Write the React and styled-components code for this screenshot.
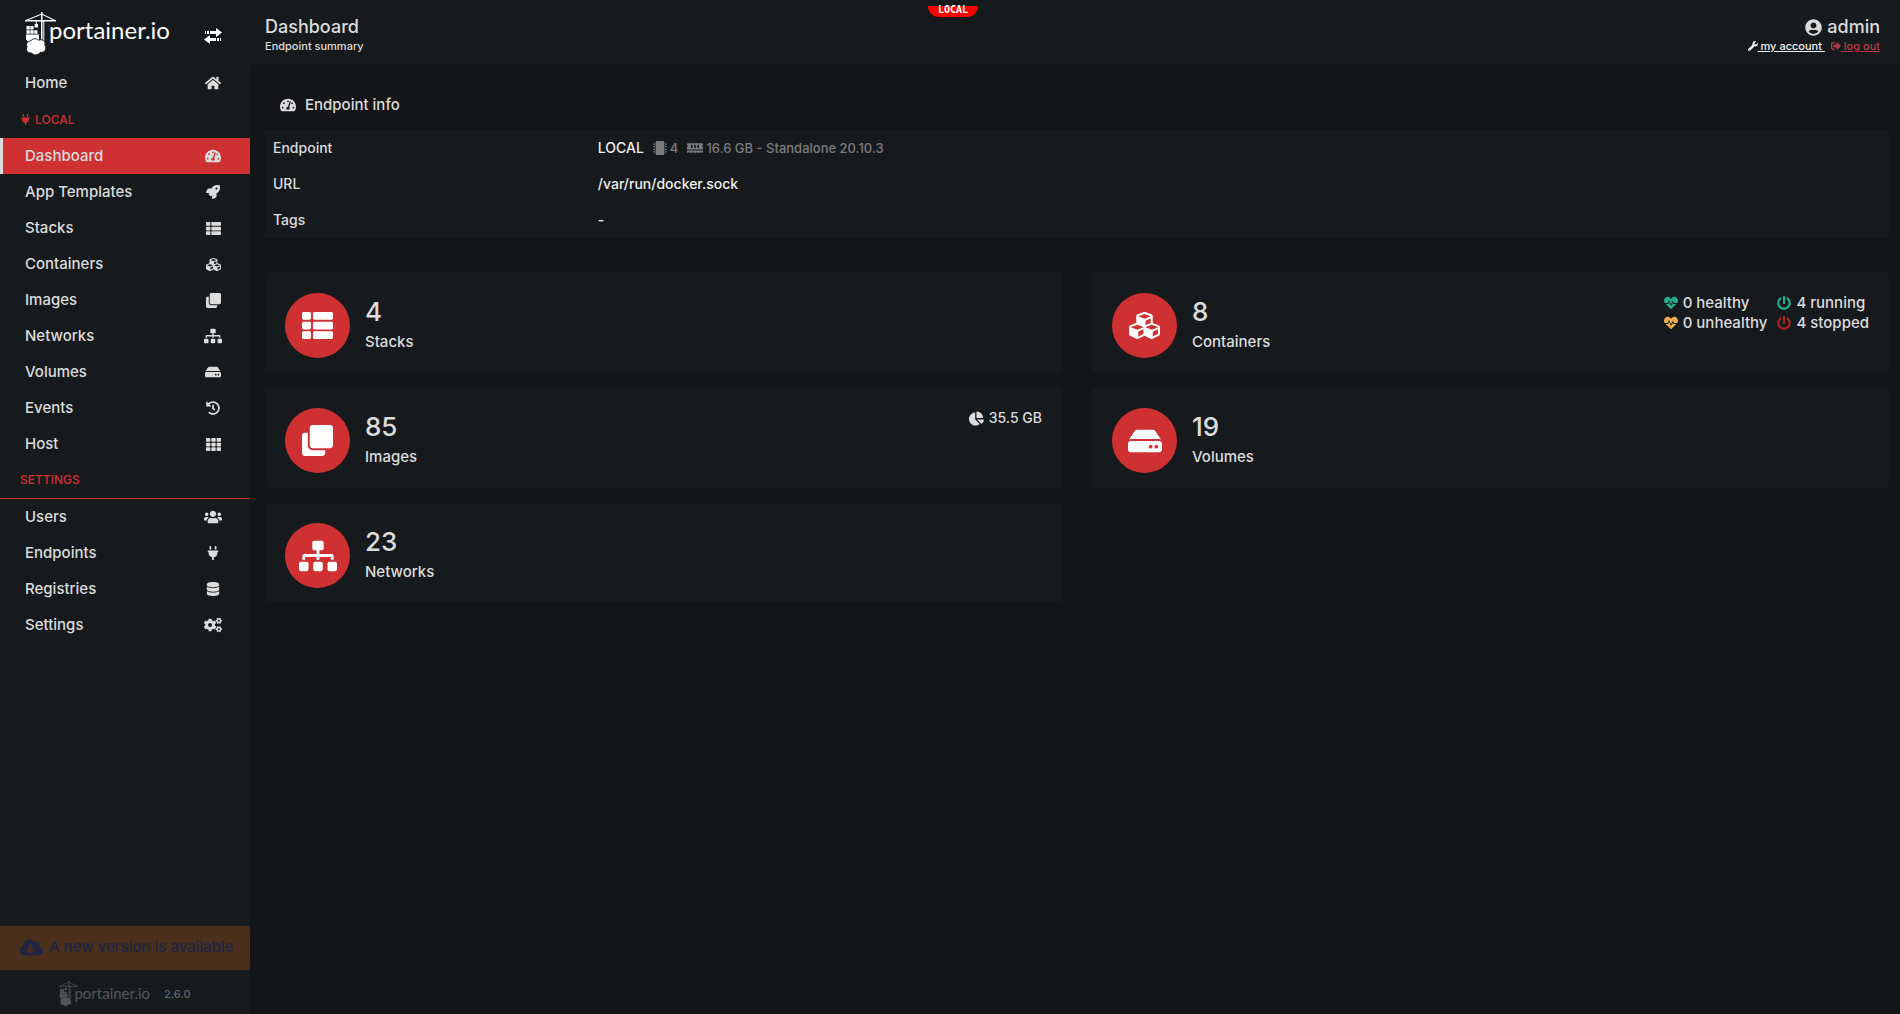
import React from "react";
import styled, { createGlobalStyle } from "styled-components";
import {
  FaChartPie, FaClone, FaCloudDownloadAlt, FaCogs, FaCubes, FaDatabase, FaHdd, FaHeartbeat,
  FaHistory, FaHome, FaMemory, FaMicrochip, FaPlug, FaPowerOff, FaRocket, FaSignOutAlt,
  FaSitemap, FaTachometerAlt, FaTh, FaThList, FaUserCircle, FaUsers, FaWrench,
} from "react-icons/fa";

const color = {
  page: "#141518",
  panel: "#171a1d",
  accent: "#cf3032",
  text: "#dcdcdc",
  bright: "#f0f0f0",
  muted: "#7b7c7d",
  green: "#23ae89",
  orange: "#f0ad4e",
  stop: "#ae2323",
};

const GlobalStyle = createGlobalStyle`
  * { box-sizing: border-box; }
  body {
    margin: 0;
    background: ${color.page};
    color: ${color.text};
    font: 500 15px/20px Inter, "Open Sans", sans-serif;
  }
  h1, h2, p, ul { margin: 0; padding: 0; font-weight: 500; }
  ul { list-style: none; }
  svg { display: block; flex: none; }
`;

const Shell = styled.div`
  display: grid;
  grid-template-columns: 250px minmax(0, 1fr);
  min-height: 100vh;
`;

const Sidebar = styled.aside`
  display: flex;
  flex-direction: column;
  background: ${color.panel};
`;

const Brand = styled.div`
  display: flex;
  align-items: center;
  justify-content: space-between;
  height: 65px;
  padding: 2px 28px 0 25px;
`;

const LogoBox = styled.a`
  display: flex;
  color: ${(p) => (p.$small ? "#54575a" : "#fff")};
  text-decoration: none;
`;

const LogoName = styled.span`
  margin-left: ${(p) => (p.$small ? "-6px" : "-11px")};
  font: 400 ${(p) => (p.$small ? "15px/24px" : "24px/36px")} Lato, sans-serif;
`;

const ToggleButton = styled.button`
  margin-top: 4px;
  padding: 0;
  border: 0;
  background: none;
  color: #fff;
  cursor: pointer;
`;

const NavLink = styled.a`
  display: flex;
  align-items: center;
  justify-content: space-between;
  height: 36px;
  padding: 0 28px 0 ${(p) => (p.$active ? 22 : 25)}px;
  border-left: ${(p) => (p.$active ? "3px solid #dcdcdc" : "0")};
  background: ${(p) => (p.$active ? color.accent : "transparent")};
  color: ${color.text};
  text-decoration: none;
`;

const NavIcon = styled.span`
  display: flex;
  justify-content: center;
  width: 18px;
`;

const NavHeading = styled.h2`
  display: flex;
  align-items: center;
  gap: 4px;
  height: 37px;
  padding: 0 20px;
  border-bottom: ${(p) => (p.$ruled ? `1px solid ${color.accent}` : "0")};
  color: ${color.accent};
  font-size: 12px;
  text-transform: uppercase;
`;

const UpdateBanner = styled.a`
  display: flex;
  align-items: center;
  gap: 6px;
  height: 44px;
  margin-top: auto;
  padding: 0 0 2px 20px;
  border-radius: 0 3px 3px 0;
  background: #492f1c;
  color: #1f2542;
  text-decoration: none;
`;

const SidebarFooter = styled.footer`
  display: flex;
  align-items: center;
  justify-content: center;
  gap: 14px;
  height: 44px;
  padding-top: 4px;
  color: #63676a;
  font-size: 11px;
`;

const Main = styled.main`
  min-width: 0;
`;

const TopBar = styled.header`
  position: relative;
  display: flex;
  justify-content: space-between;
  height: 65px;
  padding: 15px 20px 0 15px;
  background: ${color.panel};
`;

const Title = styled.h1`
  display: flex;
  align-items: center;
  justify-content: ${(p) => (p.$end ? "flex-end" : "flex-start")};
  gap: 5px;
  font-size: 18px;
  line-height: 24px;
`;

const Subtitle = styled.p`
  font-size: 11px;
  line-height: 14px;
`;

const AccountLinks = styled.div`
  display: flex;
  gap: 6px;
  font-size: 11px;
  line-height: 14px;
`;

const AccountLink = styled.a`
  display: flex;
  align-items: center;
  color: ${(p) => (p.$danger ? "#b93a45" : color.bright)};
  white-space: pre;
`;

const HostBadge = styled.div`
  position: absolute;
  top: 6px;
  left: 678px;
  width: 50px;
  height: 11px;
  border-radius: 0 0 12px 12px;
  background: #f00;
  color: #fff;
  font: 700 10px/8px "DejaVu Sans Mono", monospace;
  text-align: center;
`;

const Content = styled.div`
  padding: 15px 11px 20px 15px;
`;

const WidgetTitle = styled.h2`
  display: flex;
  align-items: center;
  gap: 9px;
  height: 50px;
  padding: 0 15px;
  font-size: 15px;
`;

const InfoTable = styled.table`
  width: 100%;
  border-collapse: collapse;
  background: ${color.panel};
  font-size: 14px;

  th, td {
    height: 36px;
    padding: 0 8px;
    font-weight: 500;
    text-align: left;
  }
  th { width: 20%; }
  td { color: ${color.bright}; }
`;

const InfoValue = styled.div`
  display: flex;
  align-items: center;
  gap: 9px;
`;

const Spec = styled.span`
  display: flex;
  align-items: center;
  gap: 3px;
  color: ${color.muted};
  font-size: 13px;
`;

const Cards = styled.div`
  display: grid;
  grid-template-columns: repeat(2, minmax(0, 1fr));
  gap: 16px 30px;
  margin-top: 35px;
`;

const Card = styled.a`
  display: flex;
  align-items: flex-start;
  gap: 15px;
  height: 99px;
  padding: 20px 20px 0;
  border-radius: 2px;
  background: ${color.panel};
  color: ${color.text};
  text-decoration: none;
`;

const CardIcon = styled.span`
  display: grid;
  place-items: center;
  width: 65px;
  height: 65px;
  border-radius: 50%;
  background: ${color.accent};
  color: #fff;
`;

const CardCount = styled.p`
  padding-top: 3px;
  font-size: 26px;
  line-height: 32px;
`;

const CardLabel = styled.p`
  line-height: 28px;
`;

const CardAside = styled.div`
  display: grid;
  grid-template-columns: ${(p) => (p.$pairs ? "auto auto" : "auto")};
  column-gap: 10px;
  margin-left: auto;
  font-size: ${(p) => (p.$pairs ? "15px" : "14px")};
`;

const Stat = styled.span`
  display: flex;
  align-items: center;
  gap: 5px;

  svg { color: ${(p) => p.$tone}; }
`;

function Logo({ small }) {
  return (
    <LogoBox href="#" $small={small} aria-label="portainer.io">
      <svg width={small ? 21 : 35} height={small ? 26 : 44} viewBox="0 0 35 44" fill="currentColor">
        <path d="M0 8h31v1.500H0zM16 0h1.500v30H16zM18.300 9h1v21h-1zM10.800 9h1v3h-1z" />
        <path d="M1 8.500 16.700 2 30 8.500" fill="none" stroke="currentColor" strokeWidth="1.100" />
        <path d="M1.500 14h3.300v3.600H1.500zM5.300 14h3.300v3.600H5.300zM9.600 12h3.400v3.400H9.600zM1.500 18.200h3.300v3.600H1.500zM5.300 18.200h3.300v3.600H5.300zM9.200 18.200h3.300v3.600H9.200z" />
        <path d="M1 22.500h13v5l-2 3H4l-3-3z" />
        <path
          d="M5.500 29c2-2.800 6-3 8-.8 4-1.700 7.500 1.300 6.300 4.800 2.700 3.600 0 8-4.500 7.300-2 3.400-7 3.300-8.600.7-4.500.4-6.700-3.300-4.600-6.300-1.500-3 .4-5.700 3.400-5.700z"
          stroke={color.panel}
          strokeWidth="1"
        />
      </svg>
      <LogoName $small={small}>portainer.io</LogoName>
    </LogoBox>
  );
}

function TransferIcon() {
  return (
    <svg width="18" height="16" viewBox="0 0 18 16" fill="currentColor">
      <path d="M1 3h1v3H1zM3 3h2v3H3zM6 3h6V0l6 4.500L12 9V6H6zM17 10h-1v3h1zM15 10h-2v3h2zM12 10H6V7l-6 4.500L6 16v-3h6z" />
    </svg>
  );
}

const mainLinks = [
  ["Dashboard", FaTachometerAlt, 16],
  ["App Templates", FaRocket, 14],
  ["Stacks", FaThList, 15],
  ["Containers", FaCubes, 15],
  ["Images", FaClone, 15],
  ["Networks", FaSitemap, 18],
  ["Volumes", FaHdd, 16],
  ["Events", FaHistory, 14],
  ["Host", FaTh, 15],
];

const settingsLinks = [
  ["Users", FaUsers, 18],
  ["Endpoints", FaPlug, 14],
  ["Registries", FaDatabase, 14],
  ["Settings", FaCogs, 18],
];

function NavItem({ label, icon: Icon, size, active }) {
  return (
    <li>
      <NavLink href="#" $active={active} aria-current={active ? "page" : undefined}>
        {label}
        <NavIcon><Icon size={size} /></NavIcon>
      </NavLink>
    </li>
  );
}

function CountCard({ icon: Icon, size, count, label, children }) {
  return (
    <Card href="#">
      <CardIcon><Icon size={size} /></CardIcon>
      <div>
        <CardCount>{count}</CardCount>
        <CardLabel>{label}</CardLabel>
      </div>
      {children}
    </Card>
  );
}

export default function App() {
  return (
    <>
      <GlobalStyle />
      <Shell>
        <Sidebar>
          <Brand>
            <Logo />
            <ToggleButton type="button" aria-label="Toggle sidebar"><TransferIcon /></ToggleButton>
          </Brand>
          <nav>
            <ul><NavItem label="Home" icon={FaHome} size={16} /></ul>
            <NavHeading><FaPlug size={11} />Local</NavHeading>
            <ul>
              {mainLinks.map(([label, icon, size]) => (
                <NavItem key={label} label={label} icon={icon} size={size} active={label === "Dashboard"} />
              ))}
            </ul>
            <NavHeading $ruled>Settings</NavHeading>
            <ul>
              {settingsLinks.map(([label, icon, size]) => (
                <NavItem key={label} label={label} icon={icon} size={size} />
              ))}
            </ul>
          </nav>
          <UpdateBanner href="#"><FaCloudDownloadAlt size={23} />A new version is available</UpdateBanner>
          <SidebarFooter><Logo small />2.6.0</SidebarFooter>
        </Sidebar>
        <Main>
          <TopBar>
            <div>
              <Title>Dashboard</Title>
              <Subtitle>Endpoint summary</Subtitle>
            </div>
            <HostBadge>LOCAL</HostBadge>
            <div>
              <Title as="div" $end><FaUserCircle size={17} />admin</Title>
              <AccountLinks>
                <AccountLink href="#"><FaWrench size={10} /> my account </AccountLink>
                <AccountLink href="#" $danger><FaSignOutAlt size={10} /> log out</AccountLink>
              </AccountLinks>
            </div>
          </TopBar>
          <Content>
            <WidgetTitle><FaTachometerAlt size={16} />Endpoint info</WidgetTitle>
            <InfoTable>
              <tbody>
                <tr>
                  <th scope="row">Endpoint</th>
                  <td>
                    <InfoValue>
                      LOCAL
                      <Spec><FaMicrochip size={14} />4</Spec>
                      <Spec><FaMemory size={16} />16.6 GB - Standalone 20.10.3</Spec>
                    </InfoValue>
                  </td>
                </tr>
                <tr><th scope="row">URL</th><td>/var/run/docker.sock</td></tr>
                <tr><th scope="row">Tags</th><td>-</td></tr>
              </tbody>
            </InfoTable>
            <Cards>
              <CountCard icon={FaThList} size={31} count="4" label="Stacks" />
              <CountCard icon={FaCubes} size={31} count="8" label="Containers">
                <CardAside $pairs>
                  <Stat $tone={color.green}><FaHeartbeat size={14} />0 healthy</Stat>
                  <Stat $tone={color.green}><FaPowerOff size={14} />4 running</Stat>
                  <Stat $tone={color.orange}><FaHeartbeat size={14} />0 unhealthy</Stat>
                  <Stat $tone={color.stop}><FaPowerOff size={14} />4 stopped</Stat>
                </CardAside>
              </CountCard>
              <CountCard icon={FaClone} size={31} count="85" label="Images">
                <CardAside><Stat><FaChartPie size={15} />35.5 GB</Stat></CardAside>
              </CountCard>
              <CountCard icon={FaHdd} size={34} count="19" label="Volumes" />
              <CountCard icon={FaSitemap} size={38} count="23" label="Networks" />
            </Cards>
          </Content>
        </Main>
      </Shell>
    </>
  );
}
